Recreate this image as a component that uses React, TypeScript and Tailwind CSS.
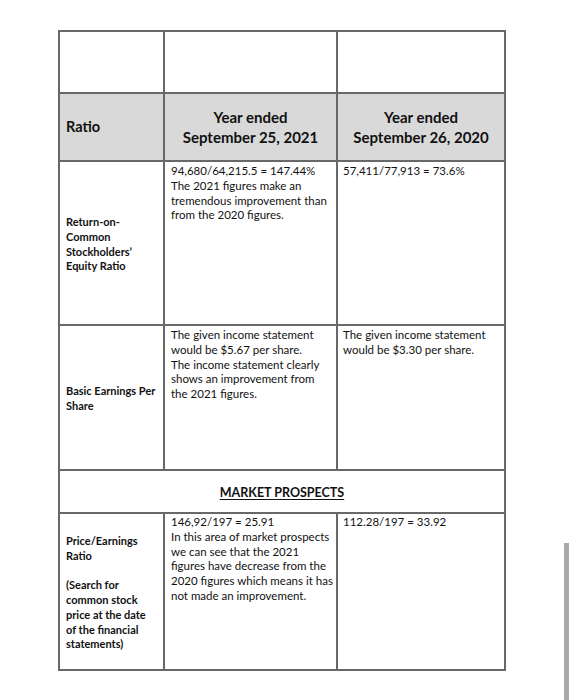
const font = { fontFamily: 'Lato, "Open Sans", sans-serif' }

function Lines({ lines }: { lines: string[] }) {
  return (
    <>
      {lines.map((l, i) => (
        <div key={i} className="whitespace-nowrap">
          {l === '' ? '\u00a0' : l}
        </div>
      ))}
    </>
  )
}

const cell = 'border-2 border-[#686868] p-0 align-top'
const label = 'text-[11px] font-bold'
const body = 'text-[11.5px]'

export default function App() {
  return (
    <div className="relative h-[700px] w-[573px] overflow-hidden bg-white text-[#111]" style={font}>
      <div className="pl-[58px] pt-[30px]">
        <table className="w-[446px] table-fixed border-collapse">
          <colgroup>
            <col className="w-[105px]" />
            <col className="w-[173px]" />
            <col className="w-[168px]" />
          </colgroup>
          <tbody>
            <tr className="h-[62px]">
              <td className={cell}></td>
              <td className={cell}></td>
              <td className={cell}></td>
            </tr>
            <tr className="h-[68px] bg-[#d9d9d9]">
              <td className={`${cell} !align-middle pl-[6px] text-[14.5px] font-bold`}>Ratio</td>
              <td className={`${cell} !align-middle text-center text-[15px] font-bold leading-[20px]`}>
                <Lines lines={['Year ended', 'September 25, 2021']} />
              </td>
              <td className={`${cell} !align-middle text-center text-[15px] font-bold leading-[20px]`}>
                <Lines lines={['Year ended', 'September 26, 2020']} />
              </td>
            </tr>
            <tr className="h-[164px] leading-[14.8px]">
              <td className={`${cell} ${label} !align-middle pl-[6px] pt-[3px]`}>
                <Lines lines={['Return-on-', 'Common', 'Stockholders\u2019', 'Equity Ratio']} />
              </td>
              <td className={`${cell} ${body} pl-[6px] pt-[2px]`}>
                <Lines
                  lines={[
                    '94,680/64,215.5 = 147.44%',
                    'The 2021 figures make an',
                    'tremendous improvement than',
                    'from the 2020 figures.',
                  ]}
                />
              </td>
              <td className={`${cell} ${body} pl-[5px] pt-[2px]`}>
                <Lines lines={['57,411/77,913 = 73.6%']} />
              </td>
            </tr>
            <tr className="h-[145px] leading-[14.8px]">
              <td className={`${cell} ${label} !align-middle pl-[6px] pt-[3px]`}>
                <Lines lines={['Basic Earnings Per', 'Share']} />
              </td>
              <td className={`${cell} ${body} pl-[6px] pt-[2px]`}>
                <Lines
                  lines={[
                    'The given income statement',
                    'would be $5.67 per share.',
                    'The income statement clearly',
                    'shows an improvement from',
                    'the 2021 figures.',
                  ]}
                />
              </td>
              <td className={`${cell} ${body} pl-[5px] pt-[2px]`}>
                <Lines lines={['The given income statement', 'would be $3.30 per share.']} />
              </td>
            </tr>
            <tr className="h-[43px]">
              <td
                colSpan={3}
                className={`${cell} !align-middle pt-[3px] text-center text-[12.5px] font-bold underline underline-offset-2`}
              >
                MARKET PROSPECTS
              </td>
            </tr>
            <tr className="h-[157px] leading-[14.8px]">
              <td className={`${cell} ${label} !align-middle pl-[6px] pt-[3px]`}>
                <Lines
                  lines={[
                    'Price/Earnings',
                    'Ratio',
                    '',
                    '(Search for',
                    'common stock',
                    'price at the date',
                    'of the financial',
                    'statements)',
                  ]}
                />
              </td>
              <td className={`${cell} ${body} pl-[6px] pt-[1px]`}>
                <Lines
                  lines={[
                    '146,92/197 = 25.91',
                    'In this area of market prospects',
                    'we can see that the 2021',
                    'figures have decrease from the',
                    '2020 figures which means it has',
                    'not made an improvement.',
                  ]}
                />
              </td>
              <td className={`${cell} ${body} pl-[5px] pt-[1px]`}>
                <Lines lines={['112.28/197 = 33.92']} />
              </td>
            </tr>
          </tbody>
        </table>
      </div>
      <div className="absolute left-[564px] top-[543px] h-[157px] w-[5px] bg-[#a9a9a9]" />
    </div>
  )
}
